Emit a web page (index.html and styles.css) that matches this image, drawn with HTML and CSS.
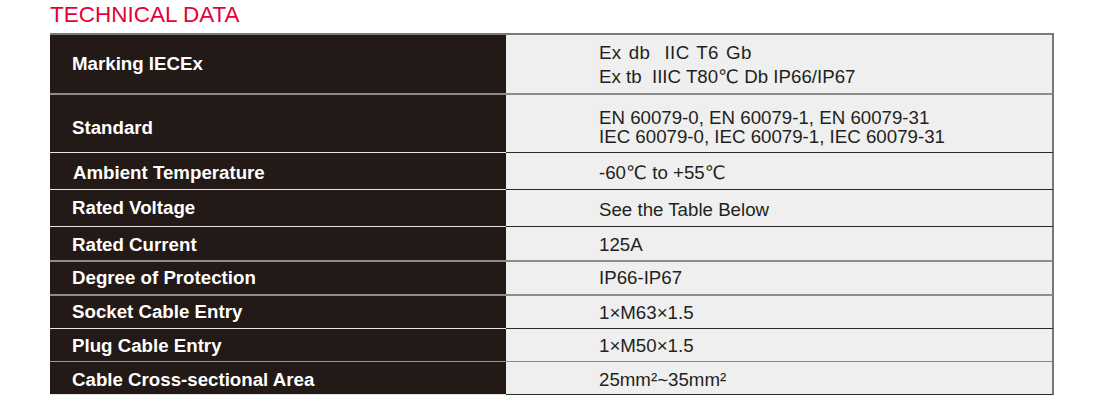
FILE: index.html
```html
<!DOCTYPE html>
<html lang="en">
<head>
<meta charset="utf-8">
<title>Technical Data</title>
<link rel="stylesheet" href="styles.css">
</head>
<body>
<h1 class="title">TECHNICAL DATA</h1>
<div class="table">
  <div class="row row--first row--tall">
    <div class="label">Marking IECEx</div>
    <div class="value value--loose">
      <div class="spaced">Ex db&nbsp; IIC T6 Gb</div>
      <div>Ex tb&nbsp; IIIC T80℃ Db IP66/IP67</div>
    </div>
  </div>
  <div class="row row--tall2 row--grey row--down4">
    <div class="label">Standard</div>
    <div class="value value--tight">
      <div>EN 60079-0, EN 60079-1, EN 60079-31</div>
      <div>IEC 60079-0, IEC 60079-1, IEC 60079-31</div>
    </div>
  </div>
  <div class="row row--h37 row--down3">
    <div class="label label--nudge">Ambient Temperature</div>
    <div class="value">-60℃ to +55℃</div>
  </div>
  <div class="row row--h37">
    <div class="label">Rated Voltage</div>
    <div class="value value--low">See the Table Below</div>
  </div>
  <div class="row row--h34 row--down1">
    <div class="label">Rated Current</div>
    <div class="value">125A</div>
  </div>
  <div class="row row--h34 row--grey">
    <div class="label">Degree of Protection</div>
    <div class="value">IP66-IP67</div>
  </div>
  <div class="row row--h34 row--grey">
    <div class="label">Socket Cable Entry</div>
    <div class="value value--low1">1×M63×1.5</div>
  </div>
  <div class="row row--h33 row--down1">
    <div class="label">Plug Cable Entry</div>
    <div class="value value--low1">1×M50×1.5</div>
  </div>
  <div class="row row--h34 row--greyish row--last row--down3">
    <div class="label">Cable Cross-sectional Area</div>
    <div class="value">25mm²~35mm²</div>
  </div>
</div>
</body>
</html>
```

FILE: styles.css
```css
html, body {
  margin: 0;
  padding: 0;
  background: #ffffff;
}

body {
  font-family: "Liberation Sans", Arial, "DejaVu Sans", sans-serif;
}

.title {
  margin: 0 0 6px 50px;
  padding-top: 3px;
  font-size: 22.5px;
  line-height: 24px;
  font-weight: normal;
  color: #e5003c;
}

.table {
  width: 1004px;
  margin-left: 50px;
}

.row {
  display: flex;
  height: 34px;
}

.row--tall { height: 60px; }
.row--tall2 { height: 59px; }
.row--h37 { height: 37px; }
.row--h34 { height: 34px; }
.row--h33 { height: 33px; }

.label {
  box-sizing: border-box;
  width: 456px;
  flex: none;
  display: flex;
  align-items: center;
  padding-left: 22px;
  background: #231a17;
  color: #ffffff;
  font-weight: bold;
  font-size: 18.7px;
  border-top: 1px solid #e6e6e6;
}

.label--nudge { padding-left: 23px; }

.value {
  box-sizing: border-box;
  flex: 1;
  display: flex;
  flex-direction: column;
  justify-content: center;
  padding-left: 93px;
  background: #efefef;
  color: #231f20;
  font-size: 18.7px;
  border-top: 1px solid #2a2a2a;
  border-right: 2px solid #777777;
}

.spaced { word-spacing: 1.5px; letter-spacing: 0.4px; }

.value--loose { line-height: 24px; padding-top: 2px; }
.value--tight { line-height: 19px; }
.value--low { padding-top: 3px; }
.value--low1 { padding-top: 2px; }

.row--down1 .label,
.row--down1 .value { padding-top: 2px; }

.row--down3 .label,
.row--down3 .value { padding-top: 4px; }

.row--down4 .label { padding-top: 8px; }
.row--down4 .value { padding-top: 6px; }

.row--first .label,
.row--first .value {
  border-top: 2px solid #7a7a7a;
}

.row--grey .label,
.row--grey .value {
  border-top: 2px solid #8c8c8c;
}

.row--greyish .label { border-top-color: #9a9a9a; }
.row--greyish .value { border-top-color: #8a8a8a; }

.row--last .label {
  border-bottom: 1px solid #e0e0e0;
}

.row--last .value {
  border-bottom: 1px solid #2a2a2a;
}
```
